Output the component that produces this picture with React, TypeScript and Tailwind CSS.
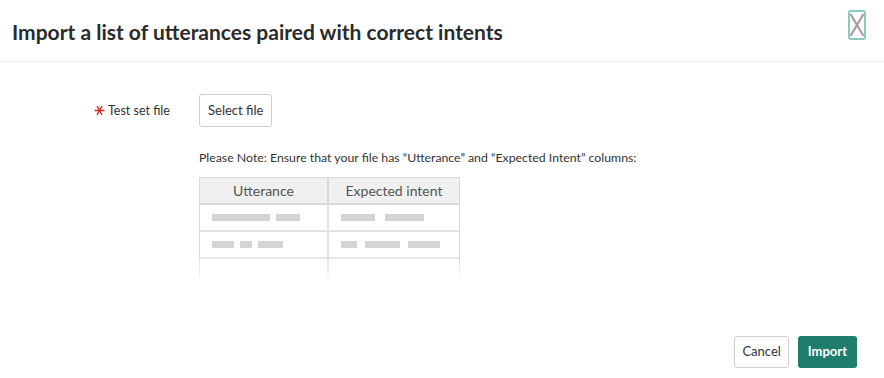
import React from "react";

const font = { fontFamily: "Lato, 'Open Sans', sans-serif" };

function Bars({ widths, gap }: { widths: number[]; gap: number }) {
  return (
    <div className="flex items-center h-[25px] pl-[12px]" style={{ gap }}>
      {widths.map((w, i) => (
        <span key={i} className="h-[7px] bg-[#d4d4d4]" style={{ width: w }} />
      ))}
    </div>
  );
}

function SampleTable() {
  const rows = [
    { a: [58, 24], aGap: 6, b: [34, 39], bGap: 10 },
    { a: [22, 12, 25], aGap: 6, b: [16, 35, 32], bGap: 8 },
  ];
  return (
    <div className="relative w-[261px] mt-[10px]">
      <div className="grid grid-cols-[129px_130px] border-l border-r border-t border-[#d9d9d9]">
        <div className="h-[27px] bg-[#f0f0f0] border-b-2 border-r-2 border-[#d9d9d9] flex items-center justify-center text-[14px] text-[#555]">
          Utterance
        </div>
        <div className="h-[27px] bg-[#f0f0f0] border-b-2 border-[#d9d9d9] flex items-center justify-center text-[14px] text-[#555]">
          Expected intent
        </div>
        {rows.map((r, i) => (
          <React.Fragment key={i}>
            <div className="border-b-2 border-r-2 border-[#e3e3e3]">
              <Bars widths={r.a} gap={r.aGap} />
            </div>
            <div className="border-b-2 border-[#e3e3e3]">
              <Bars widths={r.b} gap={r.bGap} />
            </div>
          </React.Fragment>
        ))}
        <div className="h-[23px] border-r-2 border-[#e3e3e3]" />
        <div className="h-[23px]" />
      </div>
      <div className="absolute left-[-2px] right-[-2px] bottom-0 h-[26px] bg-gradient-to-b from-transparent to-white" />
    </div>
  );
}

export default function App() {
  return (
    <div className="w-[884px] h-[378px] bg-white flex flex-col text-[#333]" style={font}>
      <div className="h-[62px] border-b border-[#ececec] flex items-center justify-between pl-[12px] pr-[18px] shrink-0">
        <h1 className="text-[21px] font-bold text-[#2b2b2b] pt-[2px]">
          Import a list of utterances paired with correct intents
        </h1>
        <button className="w-[18px] h-[30px] border-2 border-[#8cc9bf] rounded-[3px] flex items-center justify-center mt-[-12px]">
          <svg width="14" height="26" viewBox="0 0 14 26">
            <path d="M0.5 2 L13.5 24 M13.5 2 L0.5 24" stroke="#a0a0a0" strokeWidth="2.2" />
          </svg>
        </button>
      </div>

      <div className="flex-1 flex pl-[94px] pt-[32px]">
        <div className="flex items-center h-[33px] w-[105px] shrink-0">
          <svg width="11" height="11" viewBox="0 0 11 11" className="mr-[3px]">
            <path
              d="M0.5 5.5 H10.5 M3 1.2 L8 9.8 M8 1.2 L3 9.8"
              stroke="#d0312d"
              strokeWidth="1.4"
            />
          </svg>
          <span className="text-[12.5px] text-[#333] mt-[1px]">Test set file</span>
        </div>
        <div className="flex flex-col">
          <button className="self-start h-[33px] px-[8px] border border-[#cfcfcf] rounded-[3px] text-[13px] text-[#333] bg-white">
            Select file
          </button>
          <p className="text-[12.3px] text-[#333] mt-[22px]">
            Please Note: Ensure that your file has “Utterance” and “Expected Intent” columns:
          </p>
          <SampleTable />
        </div>
      </div>

      <div className="flex justify-end gap-[9px] pr-[27px] pb-[10px]">
        <button className="h-[32px] px-[7px] border border-[#cfcfcf] rounded-[3px] text-[13px] text-[#333] bg-white">
          Cancel
        </button>
        <button className="h-[32px] px-[10px] rounded-[3px] text-[13px] font-bold text-white bg-[#1f7d6d]">
          Import
        </button>
      </div>
    </div>
  );
}
